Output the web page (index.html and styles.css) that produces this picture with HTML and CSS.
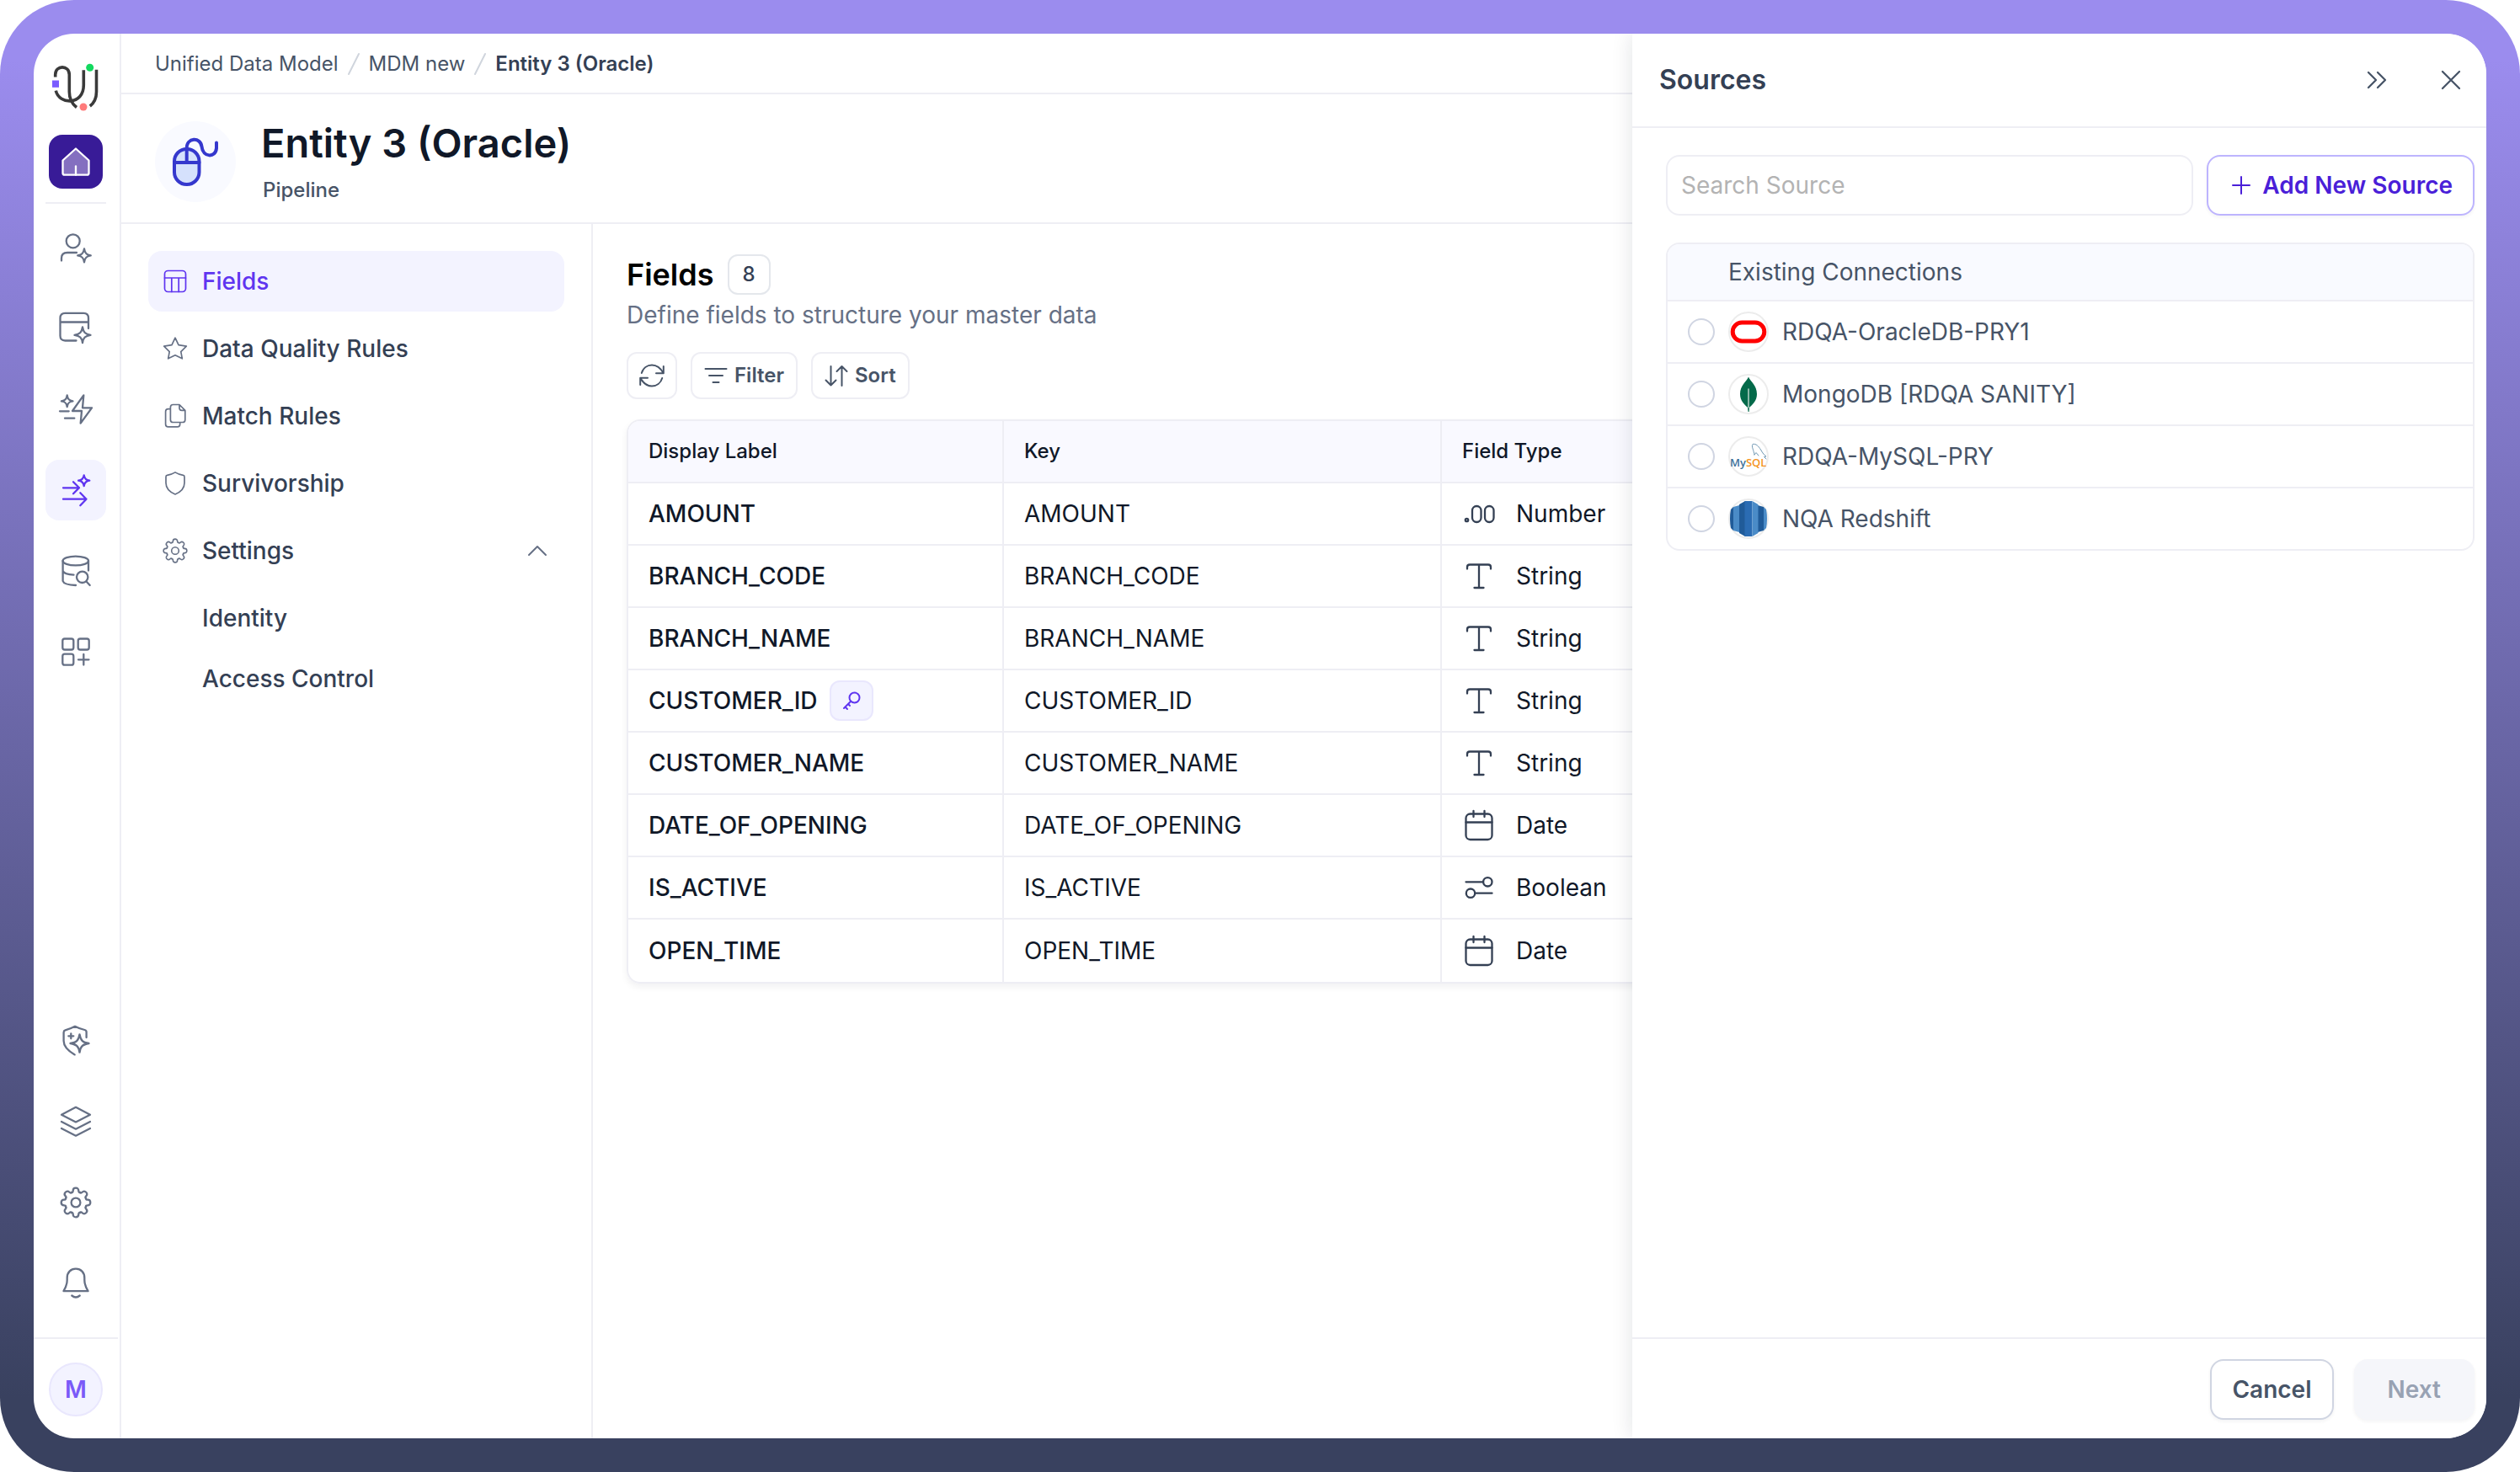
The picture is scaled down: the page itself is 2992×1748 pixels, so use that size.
FILE: index.html
```html
<!DOCTYPE html>
<html lang="en">
<head>
    <meta charset="UTF-8">
    <meta name="viewport" content="width=device-width, initial-scale=1.0">
    <title>Entity 3 (Oracle)</title>
    <link rel="stylesheet" href="styles.css">
</head>
<body>
    <!-- Shared icons -->
    <svg class="sprite" aria-hidden="true">
        <symbol id="i-gear" viewBox="0 0 40 40">
            <g transform="translate(20 20)">
                <circle r="5.4"/>
                <path id="tooth" d="M-4.97-12C-3.9-11.8-3.3-12.6-3.3-14C-3.3-16.2-1.9-17.3 0-17.3S3.3-16.2 3.3-14C3.3-12.6 3.9-11.8 4.97-12"/>
                <use href="#tooth" transform="rotate(45)"/>
                <use href="#tooth" transform="rotate(90)"/>
                <use href="#tooth" transform="rotate(135)"/>
                <use href="#tooth" transform="rotate(180)"/>
                <use href="#tooth" transform="rotate(225)"/>
                <use href="#tooth" transform="rotate(270)"/>
                <use href="#tooth" transform="rotate(315)"/>
            </g>
        </symbol>
        <symbol id="i-number" viewBox="0 0 40 40">
            <circle cx="5.5" cy="27.5" r="1.7"/>
            <rect x="12" y="11" width="10.5" height="19" rx="5.2"/>
            <rect x="27" y="11" width="10.5" height="19" rx="5.2"/>
        </symbol>
        <symbol id="i-string" viewBox="0 0 40 40">
            <path d="M6 11.5V9.500Q6 6.500 9 6.500H31Q34 6.500 34 9.500V11.500M20 6.500V34M14.500 34H25.500"/>
        </symbol>
        <symbol id="i-date" viewBox="0 0 40 40">
            <rect x="4.500" y="6.500" width="31" height="30.500" rx="5"/>
            <path d="M4.500 16.500H35.500M13.500 3V10M26.500 3V10"/>
        </symbol>
        <symbol id="i-bool" viewBox="0 0 40 40">
            <path d="M4.500 13.300H25M15.500 26.700H35.500"/>
            <circle cx="30.300" cy="13.300" r="5.200"/>
            <circle cx="10" cy="26.700" r="5.200"/>
        </symbol>
    </svg>

    <div class="frame">
        <div class="app">
            <!-- Left rail -->
            <nav class="rail" aria-label="Main">
                <svg class="logo" viewBox="0 0 64 60" aria-hidden="true">
                    <g fill="none" stroke="#3a3a3a" stroke-width="3.600">
                        <path d="M7.700 19.500V16.500C7.700 5 24.300 5 24.300 16.500V37C24.300 45 27 51 33 55.500"/>
                        <path d="M8.300 35.700C12 52.500 41.300 53.500 41.300 29V11.300"/>
                        <path d="M56.500 10.700V37C56.500 44 54 50 48.800 54"/>
                    </g>
                    <rect x="4" y="23.500" width="8" height="8.300" fill="#7a5cff"/>
                    <circle cx="48.700" cy="8.200" r="4.500" fill="#13d95f"/>
                    <circle cx="41" cy="55" r="4.500" fill="#ff7b7b"/>
                </svg>
                <a class="home" href="#" aria-label="Home">
                    <svg class="icon-40" viewBox="0 0 40 40"><path d="M20 4.500L35.500 18.500V33.500Q35.500 35.700 33.300 35.700H6.700Q4.500 35.700 4.500 33.500V18.500Z" fill="#846fc0"/><path d="M20 25.500V35.700"/></svg>
                </a>
                <div class="rail-line"></div>
                <div class="rail-group">
                    <a class="rail-item" href="#" aria-label="Users">
                        <svg class="icon-40" viewBox="0 0 40 40"><circle cx="16.700" cy="12.300" r="8"/><path d="M3 35.500V32.500Q3 26 10 26H21M30 21.500C30.700 26.500 32.500 28.600 37.800 29.400C32.500 30.200 30.700 32.300 30 37.300C29.300 32.300 27.500 30.200 22.200 29.400C27.500 28.600 29.300 26.500 30 21.500Z"/></svg>
                    </a>
                    <a class="rail-item" href="#" aria-label="Workspace">
                        <svg class="icon-40" viewBox="0 0 40 40"><path d="M20.500 34.500H7.300Q1.500 34.500 1.500 28.700V7.600Q1.500 1.800 7.300 1.800H29.200Q35 1.800 35 7.600V20M1.500 12.500H35M28 18.500C29 24.500 31 26.800 37.500 27.800C31 28.800 29 31 28 37C27 31 25 28.800 18.500 27.800C25 26.800 27 24.500 28 18.500Z"/></svg>
                    </a>
                    <a class="rail-item" href="#" aria-label="Automation">
                        <svg class="icon-40" viewBox="0 0 40 40"><path d="M29.300 3.300L16 22H27L25.700 36.700L39 18.300H28ZM1 22.300H11.700M7 30.700H18.300M9.700 3.500C10.300 8 12 9.700 16.500 10.300C12 10.900 10.300 12.600 9.700 17.100C9.100 12.600 7.400 10.900 2.900 10.300C7.400 9.700 9.100 8 9.700 3.500Z"/></svg>
                    </a>
                    <a class="rail-item rail-active" href="#" aria-label="Pipelines">
                        <svg class="icon-40" viewBox="0 0 40 40"><path d="M5 17.300H24M17 10.300L24 17.300L17 24.300M5 30.700H32.500M25.300 23.300L32.500 30.700L25.300 38.200M29.700 2.300C30.300 6.300 32 8.100 36.300 8.700C32 9.300 30.300 11.100 29.700 15.100C29.100 11.100 27.400 9.300 23.100 8.700C27.400 8.100 29.100 6.300 29.700 2.300Z"/></svg>
                    </a>
                    <a class="rail-item" href="#" aria-label="Explore data">
                        <svg class="icon-40" viewBox="0 0 40 40"><ellipse cx="19.800" cy="8" rx="15.200" ry="5.400"/><path d="M4.600 8V32Q6 36.500 20 37M35 8V19.500M4.600 20Q6.500 24 17.500 24.700"/><circle cx="27.700" cy="27.300" r="6.700"/><path d="M32.500 32.500L36.700 37"/></svg>
                    </a>
                    <a class="rail-item" href="#" aria-label="Apps">
                        <svg class="icon-40" viewBox="0 0 40 40"><rect x="4.300" y="4.500" width="13" height="13" rx="2.500"/><rect x="22.700" y="4.500" width="13" height="13" rx="2.500"/><rect x="4.300" y="22.700" width="13" height="13" rx="2.500"/><path d="M29.300 23V35.500M23 29.300H35.500"/></svg>
                    </a>
                </div>
                <div class="rail-group rail-bottom">
                    <a class="rail-item" href="#" aria-label="Governance">
                        <svg class="icon-40" viewBox="0 0 40 40"><path d="M18.700 36.400C11 32 5.600 27 5.600 20V10Q5.600 8 7.500 7.400C12 6.200 15 5 19 2.800C23 5 26 6 30.500 7Q32.600 7.500 32.600 9.500V16M14.300 11.300V17.300M11.300 14.300H17.300M24.500 12.300C25.600 19.300 28 21.800 35.500 23C28 24.200 25.600 26.700 24.500 33.700C23.400 26.700 21 24.200 13.500 23C21 21.800 23.400 19.300 24.500 12.300Z"/></svg>
                    </a>
                    <a class="rail-item" href="#" aria-label="Layers">
                        <svg class="icon-40" viewBox="0 0 40 40"><path d="M20 2.800L37 11.700L20 20.400L3 11.700ZM3 20L20 28.700L37 20M3 28L20 36.700L37 28"/></svg>
                    </a>
                    <a class="rail-item" href="#" aria-label="Settings">
                        <svg class="icon-40"><use href="#i-gear"/></svg>
                    </a>
                    <a class="rail-item" href="#" aria-label="Notifications">
                        <svg class="icon-40" viewBox="0 0 40 40"><path d="M5.500 29.200C8 25 9.700 21 9.700 16V13.500C9.700 7 14 2.700 20 2.700S30.300 7 30.300 13.500V16C30.300 21 32 25 34.500 29.200ZM15.300 34.500Q20 38.500 24.700 34.500"/></svg>
                    </a>
                </div>
                <div class="rail-user"><span class="avatar">M</span></div>
            </nav>

            <!-- Page -->
            <div class="page">
                <nav class="breadcrumb" aria-label="Breadcrumb">
                    <a href="#">Unified Data Model</a>
                    <svg class="slash" viewBox="0 0 12 26"><path d="M0 25L12 1"/></svg>
                    <a href="#">MDM new</a>
                    <svg class="slash" viewBox="0 0 12 26"><path d="M0 25L12 1"/></svg>
                    <span class="current">Entity 3 (Oracle)</span>
                </nav>
                <header class="titlebar">
                    <svg class="entity" viewBox="0 0 96 96" aria-hidden="true">
                        <rect x="23" y="33" width="29.500" height="42" rx="14.500" fill="#d5e1fc"/>
                        <path d="M23 49H52.500M37.700 49V32C37.700 19 54 18.500 55.500 30C57 43.500 72 43.500 73 32V25.500"/>
                    </svg>
                    <div>
                        <h1>Entity 3 (Oracle)</h1>
                        <p class="kind">Pipeline</p>
                    </div>
                </header>
                <div class="columns">
                    <nav class="sidebar" aria-label="Entity">
                        <a class="side-item side-active" href="#">
                            <svg class="icon-32" viewBox="0 0 32 32"><rect x="3.500" y="3.500" width="25" height="25" rx="4"/><path d="M3.500 12H28.500M11.800 12V28.500M20.200 12V28.500"/></svg>
                            Fields
                        </a>
                        <a class="side-item" href="#">
                            <svg class="icon-32" viewBox="0 0 32 32"><path d="M16 3.200L20 11.600L29.300 13.200L22.800 19.600L24.300 27.800L16 23.800L7.700 27.800L9.200 19.600L2.700 13.200L12 11.600Z"/></svg>
                            Data Quality Rules
                        </a>
                        <a class="side-item" href="#">
                            <svg class="icon-32" viewBox="0 0 32 32"><path d="M21 2.500H13.500Q10.400 2.500 10.400 5.600V20.400Q10.400 23.500 13.500 23.500H24.700Q27.800 23.500 27.800 20.400V9.300ZM21 2.500V6.500Q21 9.300 23.800 9.300H27.800M10.400 7.600H7.700Q4.600 7.600 4.600 10.700V25.800Q4.600 28.900 7.700 28.900H18.600Q21.700 28.900 21.700 25.800V23.500"/></svg>
                            Match Rules
                        </a>
                        <a class="side-item" href="#">
                            <svg class="icon-32" viewBox="0 0 32 32"><path d="M16 2.900C19 4.800 22 5.900 25.500 6.300Q27 6.500 27 8.200V15.500C27 22 22 26.500 16 29C10 26.500 5 22 5 15.500V8.200Q5 6.500 6.500 6.300C10 5.900 13 4.800 16 2.900Z"/></svg>
                            Survivorship
                        </a>
                        <a class="side-item" href="#">
                            <svg class="icon-32 gear-small"><use href="#i-gear"/></svg>
                            Settings
                            <svg class="icon-32 chevron" viewBox="0 0 32 32"><path d="M6 21L16 11L26 21"/></svg>
                        </a>
                        <div class="side-sub">
                            <a href="#">Identity</a>
                            <a href="#">Access Control</a>
                        </div>
                    </nav>

                    <main class="main">
                        <div class="heading">
                            <h2>Fields</h2>
                            <span class="count">8</span>
                        </div>
                        <p class="desc">Define fields to structure your master data</p>
                        <div class="toolbar">
                            <button class="tool" type="button" aria-label="Refresh">
                                <svg class="icon-28" viewBox="2 2 28 28"><path d="M3.800 13C5.500 7 10.500 3.500 16 3.500C21.500 3.500 26 6.500 29.500 13M29.800 5V13.200H21M28.200 19C26.500 25 21.500 28.500 16 28.500C10.500 28.500 6 25.500 2.500 19M2.200 27V18.800H11"/></svg>
                            </button>
                            <button class="tool" type="button">
                                <svg class="icon-28" viewBox="0 0 28 28"><path d="M1.500 6H26.500M6 14H22M10.500 22H17.500"/></svg>
                                Filter
                            </button>
                            <button class="tool" type="button">
                                <svg class="icon-28" viewBox="0 0 28 28"><path d="M7.500 3V25.500M1.500 19.500L7.500 25.500L13.500 19.500M20.500 26V3M14.500 9L20.500 3L26.500 9"/></svg>
                                Sort
                            </button>
                        </div>
                        <div class="table-wrap">
                            <table class="fields">
                                <thead>
                                    <tr>
                                        <th class="col-label">Display Label</th>
                                        <th class="col-key">Key</th>
                                        <th>Field Type</th>
                                    </tr>
                                </thead>
                                <tbody>
                                    <tr>
                                        <td>AMOUNT</td>
                                        <td>AMOUNT</td>
                                        <td><div class="type"><svg class="icon-40"><use href="#i-number"/></svg>Number</div></td>
                                    </tr>
                                    <tr>
                                        <td>BRANCH_CODE</td>
                                        <td>BRANCH_CODE</td>
                                        <td><div class="type"><svg class="icon-40"><use href="#i-string"/></svg>String</div></td>
                                    </tr>
                                    <tr>
                                        <td>BRANCH_NAME</td>
                                        <td>BRANCH_NAME</td>
                                        <td><div class="type"><svg class="icon-40"><use href="#i-string"/></svg>String</div></td>
                                    </tr>
                                    <tr>
                                        <td>
                                            <div class="with-key">CUSTOMER_ID
                                                <span class="key-chip"><svg viewBox="0 0 24 24"><circle cx="15.500" cy="8.500" r="6"/><path d="M11.200 12.800L3 21M4.500 19.500L7 22M8 16L10 18"/></svg></span>
                                            </div>
                                        </td>
                                        <td>CUSTOMER_ID</td>
                                        <td><div class="type"><svg class="icon-40"><use href="#i-string"/></svg>String</div></td>
                                    </tr>
                                    <tr>
                                        <td>CUSTOMER_NAME</td>
                                        <td>CUSTOMER_NAME</td>
                                        <td><div class="type"><svg class="icon-40"><use href="#i-string"/></svg>String</div></td>
                                    </tr>
                                    <tr>
                                        <td>DATE_OF_OPENING</td>
                                        <td>DATE_OF_OPENING</td>
                                        <td><div class="type"><svg class="icon-40"><use href="#i-date"/></svg>Date</div></td>
                                    </tr>
                                    <tr>
                                        <td>IS_ACTIVE</td>
                                        <td>IS_ACTIVE</td>
                                        <td><div class="type"><svg class="icon-40"><use href="#i-bool"/></svg>Boolean</div></td>
                                    </tr>
                                    <tr>
                                        <td>OPEN_TIME</td>
                                        <td>OPEN_TIME</td>
                                        <td><div class="type"><svg class="icon-40"><use href="#i-date"/></svg>Date</div></td>
                                    </tr>
                                </tbody>
                            </table>
                        </div>
                    </main>
                </div>
            </div>

            <!-- Sources drawer -->
            <aside class="drawer">
                <div class="drawer-head">
                    <h2>Sources</h2>
                    <button class="icon-btn" type="button" aria-label="Collapse">
                        <svg class="icon-40" viewBox="0 0 40 40"><path d="M10 11L19 20L10 29M21 11L30 20L21 29"/></svg>
                    </button>
                    <button class="icon-btn" type="button" aria-label="Close">
                        <svg class="icon-40" viewBox="0 0 40 40"><path d="M10 10L30 30M30 10L10 30"/></svg>
                    </button>
                </div>
                <div class="drawer-body">
                    <div class="search-row">
                        <input class="search" type="text" placeholder="Search Source" aria-label="Search Source">
                        <button class="btn btn-add" type="button">
                            <svg class="icon-28" viewBox="0 0 28 28"><path d="M15 4V24M5 14H25"/></svg>
                            Add New Source
                        </button>
                    </div>
                    <div class="sources">
                        <div class="sources-head">Existing Connections</div>
                        <label class="source">
                            <input type="radio" name="source">
                            <svg class="db" viewBox="0 0 48 48"><circle class="ring" cx="24" cy="24" r="23"/><rect x="5.200" y="13" width="37.600" height="22" rx="11" fill="none" stroke="#ff0000" stroke-width="5"/></svg>
                            RDQA-OracleDB-PRY1
                        </label>
                        <label class="source">
                            <input type="radio" name="source">
                            <svg class="db" viewBox="0 0 48 48"><circle class="ring" cx="24" cy="24" r="23"/><path d="M24 3.500C26 9 34 13 34 24C34 32 29 36 25 40L24.600 45H23.600L23 40C19 36 14 32 14 24C14 13 22 9 24 3.500Z" fill="#046a4a"/><path d="M24 18V40" stroke="#b7d3c8" stroke-width="1.500"/></svg>
                            MongoDB [RDQA SANITY]
                        </label>
                        <label class="source">
                            <input type="radio" name="source">
                            <svg class="db" viewBox="0 0 48 48"><circle class="ring" cx="24" cy="24" r="23"/><text class="mysql" x="2" y="36"><tspan fill="#3c7199">My</tspan><tspan fill="#f5941e">SQL</tspan></text><path d="M31 22C30.500 17 27 12 29 9.500C33 8.500 36 12 38.500 16C40.500 19 41 21 45 24L42.500 24.500L45 27M31 22L33 19.500L36 23" fill="none" stroke="#6f97b3" stroke-width="1"/></svg>
                            RDQA-MySQL-PRY
                        </label>
                        <label class="source">
                            <input type="radio" name="source">
                            <svg class="db" viewBox="0 0 48 48"><circle class="ring" cx="24" cy="24" r="23"/><path d="M6 10L3 13Q1 24 3 35L6 38Z" fill="#205b99"/><path d="M6 10L13 8V40L6 38Z" fill="#4a8bc7"/><path d="M42 10L45 13Q47 24 45 35L42 38Z" fill="#4a8bc7"/><path d="M42 10L35 8V40L42 38Z" fill="#205b99"/><path d="M20 3L13 7V41L20 45Z" fill="#205b99"/><path d="M19.500 3H28.500V45H19.500Z" fill="#2b6cb3"/><path d="M28.500 3L35.500 7V41L28.500 45Z" fill="#4a8bc7"/></svg>
                            NQA Redshift
                        </label>
                    </div>
                </div>
                <div class="drawer-foot">
                    <button class="btn" type="button">Cancel</button>
                    <button class="btn btn-next" type="button" disabled>Next</button>
                </div>
            </aside>
        </div>
    </div>
</body>
</html>
```
FILE: styles.css
```css
* {
    box-sizing: border-box;
}
body {
    margin: 0;
    background: #ffffff;
    font-family: Inter, "Liberation Sans", sans-serif;
    font-size: 28px;
    line-height: 40px;
    color: #101828;
}
h1, h2, p {
    margin: 0;
}
a {
    color: inherit;
    text-decoration: none;
}
button, input {
    font: inherit;
    color: inherit;
}
svg {
    display: block;
    flex: none;
    fill: none;
    stroke: currentColor;
    stroke-width: 2;
    stroke-linecap: round;
    stroke-linejoin: round;
    overflow: visible;
}
.sprite {
    position: absolute;
    width: 0;
    height: 0;
}
.icon-28 {
    width: 28px;
    height: 28px;
}
.icon-32 {
    width: 32px;
    height: 32px;
    stroke-width: 1.7;
}
.icon-40 {
    width: 40px;
    height: 40px;
    stroke-width: 2.3;
}

.frame {
    height: 100vh;
    padding: 40px;
    border-radius: 88px;
    background: linear-gradient(#9b8cee 4%, #39415f 95%);
}
.app {
    position: relative;
    display: flex;
    height: 100%;
    border-radius: 48px;
    background: #ffffff;
    overflow: hidden;
}

/* Rail */
.rail {
    display: flex;
    flex-direction: column;
    align-items: center;
    width: 104px;
    padding-top: 32px;
    padding-right: 2px;
    border-right: 2px solid #eeeef4;
    color: #667085;
}
.logo {
    width: 64px;
    height: 60px;
    margin-bottom: 28px;
    stroke: none;
    stroke-linecap: butt;
}
.home {
    display: grid;
    place-items: center;
    width: 64px;
    height: 64px;
    border-radius: 16px;
    background: #381b97;
    color: #ffffff;
}
.rail-line {
    width: 72px;
    height: 2px;
    margin: 16px 0;
    background: #eeeef4;
}
.rail-group {
    display: flex;
    flex-direction: column;
    gap: 24px;
}
.rail-item {
    display: grid;
    place-items: center;
    width: 72px;
    height: 72px;
    border-radius: 16px;
}
.rail-active {
    background: #f3f3ff;
    color: #5f35f0;
}
.rail-bottom {
    margin-top: auto;
    margin-bottom: 28px;
}
.rail-user {
    display: grid;
    place-items: center;
    align-self: stretch;
    height: 120px;
    padding-top: 2px;
    border-top: 2px solid #eeeef4;
}
.avatar {
    display: grid;
    place-items: center;
    width: 64px;
    height: 64px;
    border: 2px solid #e9e7fd;
    border-radius: 50%;
    background: #f3f3ff;
    color: #7a5af8;
    font-weight: 600;
}

/* Page */
.page {
    display: flex;
    flex-direction: column;
    flex: 1;
    min-width: 0;
}
.breadcrumb {
    display: flex;
    align-items: center;
    gap: 12px;
    height: 72px;
    padding: 2px 40px 0;
    border-bottom: 2px solid #eeeef4;
    font-size: 24px;
    color: #475467;
}
.breadcrumb .current {
    font-weight: 600;
    color: #344054;
}
.slash {
    width: 12px;
    height: 26px;
    stroke: #d0d5dd;
}
.titlebar {
    display: flex;
    align-items: center;
    gap: 30px;
    height: 154px;
    padding: 8px 40px 0;
    border-bottom: 2px solid #eeeef4;
}
.entity {
    width: 96px;
    height: 96px;
    border-radius: 50%;
    background: #f9faff;
    stroke: #3538cd;
    stroke-width: 4;
}
h1 {
    font-size: 47px;
    line-height: 60px;
    font-weight: 600;
}
.kind {
    margin-top: 8px;
    padding-left: 2px;
    font-size: 24px;
    line-height: 36px;
    font-weight: 500;
    color: #475467;
}
.columns {
    display: flex;
    flex: 1;
    min-height: 0;
}
.sidebar {
    width: 560px;
    padding: 32px;
    border-right: 2px solid #eeeef4;
    font-weight: 500;
    color: #344054;
}
.side-item {
    display: flex;
    align-items: center;
    gap: 16px;
    height: 72px;
    margin-bottom: 8px;
    padding: 0 16px;
    border-radius: 16px;
}
.side-item svg {
    color: #667085;
}
.side-active, .side-active svg {
    background: #f3f3ff;
    color: #5f35f0;
}
.gear-small {
    stroke-width: 2;
}
.chevron {
    margin-left: auto;
    stroke-width: 2;
}
.side-sub a {
    display: block;
    padding: 16px 64px;
}

/* Fields */
.main {
    flex: 1;
    min-width: 0;
    padding: 36px 40px;
}
.heading {
    display: flex;
    align-items: center;
    gap: 16px;
}
.heading h2 {
    font-size: 36px;
    font-weight: 600;
    color: #000000;
}
.count {
    height: 48px;
    padding: 0 16px;
    border: 2px solid #e4e7ec;
    border-radius: 12px;
    font-size: 24px;
    line-height: 44px;
    font-weight: 500;
    color: #344054;
}
.desc {
    margin: 4px 0 24px;
    color: #667085;
}
.toolbar {
    display: flex;
    gap: 16px;
    margin-bottom: 24px;
}
.tool {
    display: flex;
    align-items: center;
    gap: 8px;
    height: 56px;
    padding: 0 14px;
    border: 2px solid #eeeef4;
    border-radius: 12px;
    background: #ffffff;
    color: #475467;
    font-size: 24px;
    font-weight: 600;
}
.table-wrap {
    border: 2px solid #eeeef4;
    border-radius: 16px;
    box-shadow: 0 4px 8px rgba(16, 24, 40, 0.06);
    overflow: hidden;
}
.fields {
    width: 100%;
    table-layout: fixed;
    border-collapse: separate;
    border-spacing: 0;
}
.fields th, .fields td {
    height: 74px;
    padding: 0 24px;
    border-right: 2px solid #eeeef4;
    border-bottom: 2px solid #eeeef4;
    text-align: left;
}
.fields th {
    background: #f9f9ff;
    font-size: 24px;
    font-weight: 500;
}
.fields th:last-child, .fields td:last-child {
    border-right: 0;
}
.fields tbody tr:last-child td {
    border-bottom: 0;
}
.fields td:first-child {
    font-weight: 500;
}
.col-label {
    width: 446px;
}
.col-key {
    width: 520px;
}
.type {
    display: flex;
    align-items: center;
    gap: 24px;
}
.type svg {
    color: #344054;
}
.with-key {
    display: flex;
    align-items: center;
    gap: 14px;
}
.key-chip {
    display: grid;
    place-items: center;
    width: 52px;
    height: 48px;
    border: 2px solid #e9e7fd;
    border-radius: 12px;
    background: #f3f3ff;
    color: #5f35f0;
}
.key-chip svg {
    width: 24px;
    height: 24px;
}

/* Drawer */
.drawer {
    position: absolute;
    top: 0;
    right: 0;
    bottom: 0;
    display: flex;
    flex-direction: column;
    width: 1014px;
    background: #ffffff;
    box-shadow: 0 0 24px rgba(16, 24, 40, 0.12);
    color: #475467;
}
.drawer-head {
    display: flex;
    align-items: center;
    gap: 48px;
    height: 112px;
    padding: 0 22px 0 32px;
    border-bottom: 2px solid #eeeef4;
}
.drawer-head h2 {
    flex: 1;
    font-size: 32px;
    font-weight: 600;
    color: #344054;
}
.icon-btn {
    padding: 0;
    border: 0;
    background: none;
}
.drawer-body {
    flex: 1;
    padding: 32px 14px 32px 40px;
}
.search-row {
    display: flex;
    gap: 16px;
    margin-bottom: 32px;
}
.search {
    flex: 1;
    min-width: 0;
    height: 72px;
    padding: 0 16px;
    border: 2px solid #eeeef4;
    border-radius: 16px;
    background: #ffffff;
}
.search::placeholder {
    color: #b3b3b3;
    opacity: 1;
}
.btn {
    display: flex;
    align-items: center;
    justify-content: center;
    gap: 12px;
    height: 72px;
    padding: 0 24px;
    border: 2px solid #d0d5e2;
    border-radius: 16px;
    background: #ffffff;
    box-shadow: 0 2px 4px rgba(16, 24, 40, 0.05);
    color: #475467;
    font-weight: 600;
}
.btn-add {
    border-color: #bdb4fe;
    color: #4a1fd8;
}
.btn-next {
    padding: 0 38px;
    border-color: #f5f6fa;
    background: #f5f6fa;
    color: #98a2b3;
}
.sources {
    border: 2px solid #eeeef4;
    border-radius: 16px;
    overflow: hidden;
}
.sources-head {
    height: 66px;
    padding: 0 72px;
    background: #f9faff;
    line-height: 66px;
}
.source {
    display: flex;
    align-items: center;
    gap: 16px;
    height: 74px;
    padding: 0 24px;
    border-top: 2px solid #eeeef4;
}
.source input {
    appearance: none;
    width: 32px;
    height: 32px;
    margin: 0;
    border: 2px solid #d0d5e2;
    border-radius: 50%;
}
.db {
    width: 48px;
    height: 48px;
    stroke: none;
}
.ring {
    stroke: #ececec;
}
.mysql {
    font-family: "Open Sans", sans-serif;
    font-size: 13px;
    font-weight: 600;
}
.drawer-foot {
    display: flex;
    align-items: center;
    justify-content: flex-end;
    gap: 24px;
    height: 120px;
    padding: 2px 14px 0;
    border-top: 2px solid #eeeef4;
}
```
